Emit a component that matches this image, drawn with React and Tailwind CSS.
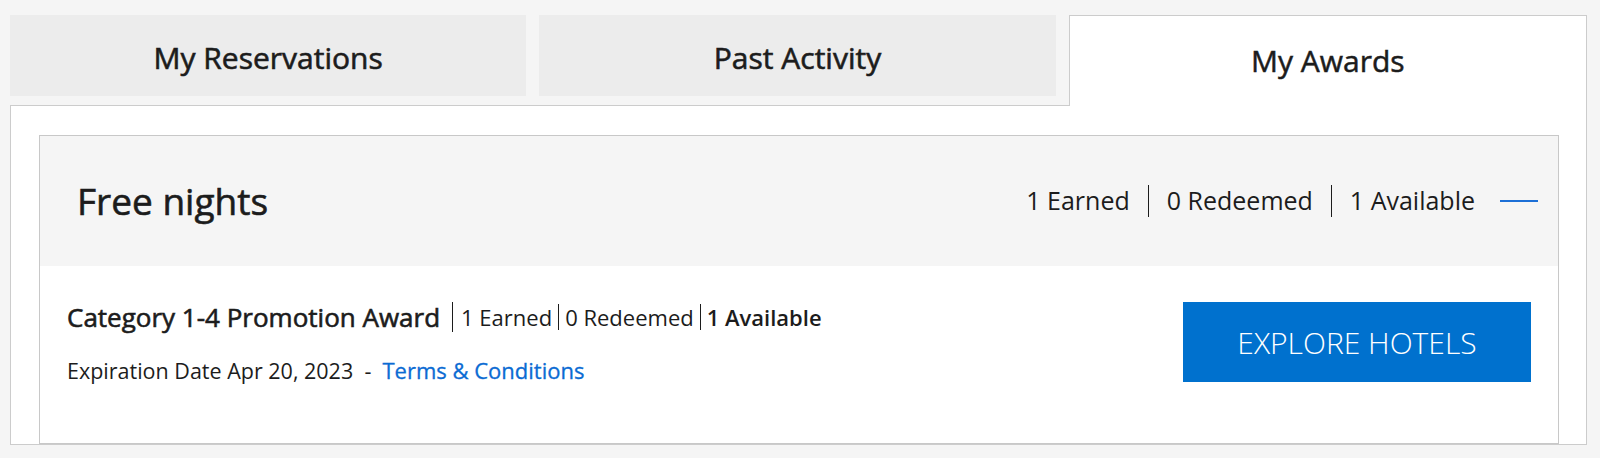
import React from 'react';

const tabs = [
  { label: 'My Reservations', active: false },
  { label: 'Past Activity', active: false },
  { label: 'My Awards', active: true },
];

function Sep({ className }) {
  return <span className={'inline-block w-px bg-[#1c1c1c] ' + className} />;
}

export default function App() {
  return (
    <div className="min-h-[458px] bg-[#f5f5f5] pt-[15px] font-['Open_Sans',sans-serif] text-[#1c1c1c]">
      <div className="ml-[10px] w-[1577px]">
        {/* Tabs */}
        <div className="flex items-start gap-[13px]">
          {tabs.map((t) =>
            t.active ? (
              <div
                key={t.label}
                className="relative z-10 flex h-[91px] flex-1 items-center justify-center border-x border-t border-[#cccccc] bg-white pb-[2px] text-[30px] [-webkit-text-stroke:0.5px_#1c1c1c]"
              >
                {t.label}
              </div>
            ) : (
              <div
                key={t.label}
                className="flex h-[81px] flex-1 items-center justify-center bg-[#ececec] pt-[4px] text-[30px] [-webkit-text-stroke:0.6px_#1c1c1c]"
              >
                {t.label}
              </div>
            )
          )}
        </div>

        {/* Panel */}
        <div className="-mt-px border border-[#cccccc] bg-white pl-[28px] pr-[27px] pt-[29px]">
          <div className="border border-[#c8c8c8]">
            {/* Header */}
            <div className="flex h-[130px] items-center justify-between bg-[#f5f5f5] pl-[37px] pr-[20px]">
              <h2 className="text-[37px] [-webkit-text-stroke:0.6px_#1c1c1c]">Free nights</h2>
              <div className="flex items-center text-[25px]">
                <span>1 Earned</span>
                <Sep className="mx-[18px] h-[32px]" />
                <span>0 Redeemed</span>
                <Sep className="mx-[18px] h-[32px]" />
                <span>1 Available</span>
                <span className="ml-[25px] inline-block h-[2px] w-[38px] bg-[#1c6fd6]" />
              </div>
            </div>

            {/* Award row */}
            <div className="flex items-start justify-between pb-[57px] pl-[27px] pr-[27px] pt-[36px]">
              <div>
                <div className="flex h-[30px] items-center">
                  <span className="text-[26px] [-webkit-text-stroke:0.6px_#1c1c1c]">Category 1-4 Promotion Award</span>
                  <Sep className="ml-[12px] mr-[8px] h-[30px]" />
                  <span className="text-[22px]">1 Earned</span>
                  <Sep className="mx-[6px] h-[26px]" />
                  <span className="text-[22px]">0 Redeemed</span>
                  <Sep className="mx-[6px] h-[26px]" />
                  <span className="text-[22px] font-semibold">1 Available</span>
                </div>
                <div className="mt-[23px] text-[21.5px] leading-[30px]">
                  Expiration Date Apr 20, 2023 &nbsp;-&nbsp;{' '}
                  <a href="#" className="text-[22px] text-[#0b6bd3] [-webkit-text-stroke:0.3px_#0b6bd3]">
                    Terms &amp; Conditions
                  </a>
                </div>
              </div>
              <button className="flex h-[80px] w-[348px] items-center justify-center bg-[#0071ce] text-[30px] font-light text-white">
                EXPLORE HOTELS
              </button>
            </div>
          </div>
        </div>
      </div>
    </div>
  );
}
